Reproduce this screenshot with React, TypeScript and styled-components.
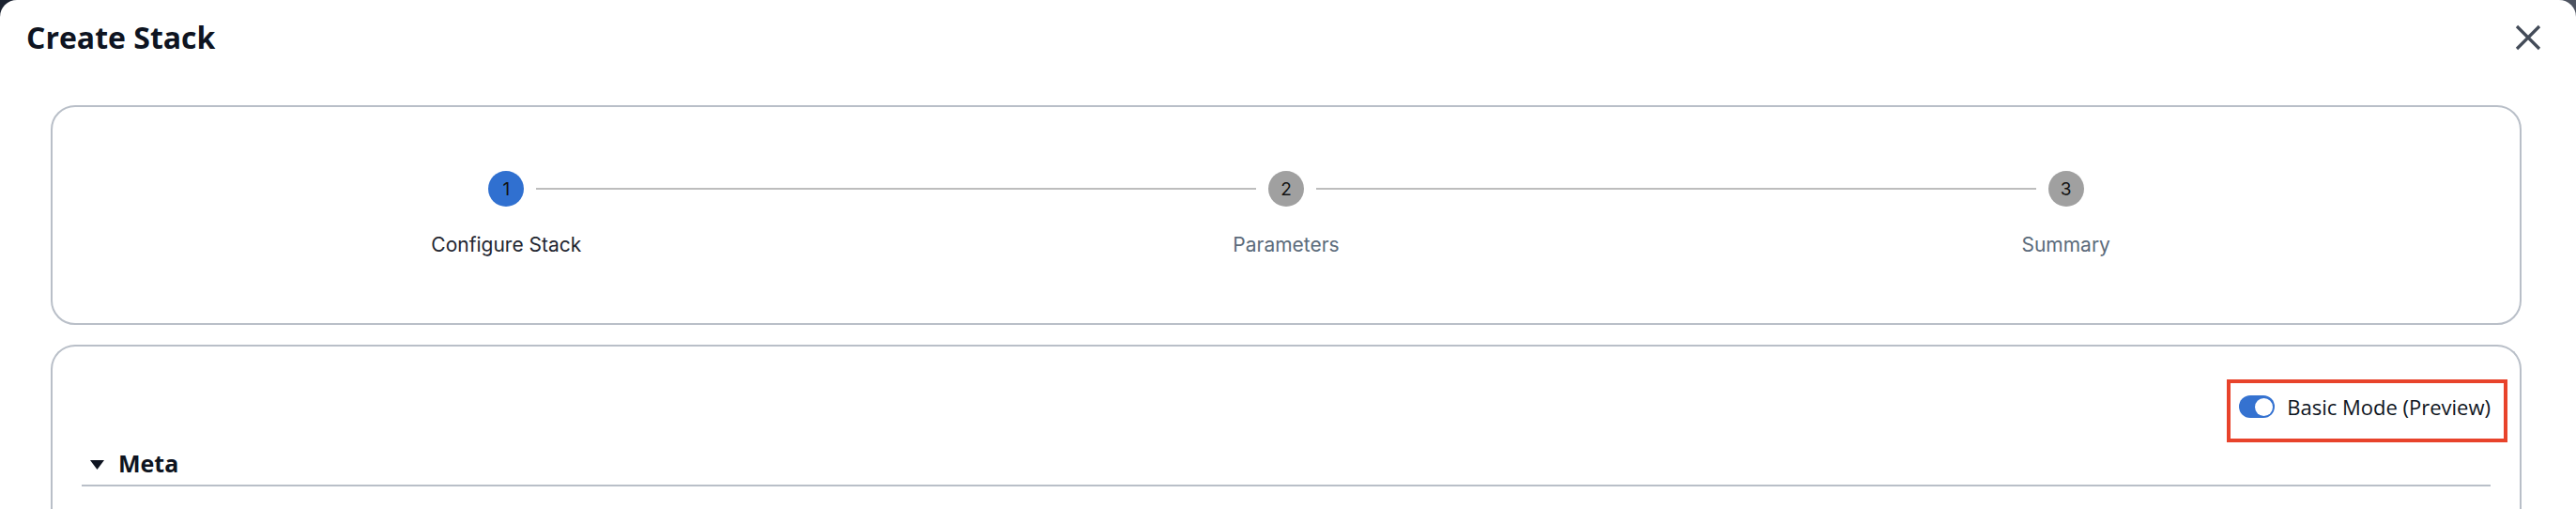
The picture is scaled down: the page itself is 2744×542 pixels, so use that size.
import React from "react";
import styled, { createGlobalStyle } from "styled-components";

const GlobalStyle = createGlobalStyle`
  html, body { margin: 0; padding: 0; }
  body {
    background: linear-gradient(90deg, #1b2230 0%, #3a414e 60%, #4d5360 100%);
    font-family: "Open Sans", "Noto Sans", sans-serif;
  }
  * { box-sizing: border-box; }
`;

const Modal = styled.div`
  width: 2744px;
  height: 542px;
  background: #ffffff;
  border-radius: 18px 18px 0 0;
  overflow: hidden;
  display: flex;
  flex-direction: column;
`;

const Header = styled.header`
  display: flex;
  align-items: center;
  justify-content: space-between;
  height: 62px;
  padding: 18px 37px 0 28px;
`;

const Title = styled.h2`
  margin: 0;
  font-size: 32px;
  font-weight: 700;
  line-height: 44px;
  color: #0e1421;
`;

const CloseButton = styled.button`
  width: 28px;
  height: 28px;
  padding: 0;
  border: none;
  background: none;
  display: flex;
  align-items: center;
  justify-content: center;
  cursor: pointer;
`;

const Body = styled.main`
  flex: 1;
  display: flex;
  flex-direction: column;
  gap: 21px;
  padding: 50px 58px 0 54px;
`;

const StepperCard = styled.section`
  border: 2px solid #b9bfc8;
  border-radius: 26px;
  padding: 68px 68px 70px;
  display: grid;
  grid-template-columns: repeat(3, 1fr);
`;

const Step = styled.div`
  display: flex;
  flex-direction: column;
  align-items: center;
`;

const Track = styled.div`
  width: 100%;
  display: flex;
  align-items: center;
  gap: 13px;
`;

const Connector = styled.span<{ $hidden?: boolean }>`
  flex: 1;
  height: 2px;
  background: ${(p) => (p.$hidden ? "transparent" : "#bdbdbd")};
`;

const Circle = styled.span<{ $active?: boolean }>`
  width: 38px;
  height: 38px;
  border-radius: 50%;
  flex-shrink: 0;
  display: flex;
  align-items: center;
  justify-content: center;
  background: ${(p) => (p.$active ? "#3070d0" : "#a0a0a0")};
  color: #121212;
  font-family: Inter, "Noto Sans", sans-serif;
  font-size: 19px;
  line-height: 1;
`;

const StepLabel = styled.span<{ $active?: boolean }>`
  margin-top: 27px;
  font-family: Inter, "Noto Sans", sans-serif;
  font-size: 21px;
  line-height: 27px;
  color: ${(p) => (p.$active ? "#1f2630" : "#5b6b7b")};
`;

const ConfigCard = styled.section`
  flex: 1;
  border: 2px solid #b9bfc8;
  border-bottom: none;
  border-radius: 26px 26px 0 0;
  padding: 35px 31px 0;
  display: flex;
  flex-direction: column;
`;

const ToolbarRow = styled.div`
  display: flex;
  justify-content: flex-end;
  margin-right: -18px;
`;

const ModeToggle = styled.label`
  display: flex;
  align-items: center;
  gap: 13px;
  border: 4px solid #e8432b;
  padding: 10px 14px 19px 9px;
  font-size: 22px;
  line-height: 30px;
  color: #0e1421;
  cursor: pointer;
`;

const Switch = styled.span<{ $on?: boolean }>`
  width: 38px;
  height: 24px;
  border-radius: 12px;
  background: ${(p) => (p.$on ? "#3572d0" : "#b0b6bf")};
  display: flex;
  align-items: center;
  justify-content: ${(p) => (p.$on ? "flex-end" : "flex-start")};
  padding: 0 2px;
  flex-shrink: 0;
`;

const Knob = styled.span`
  width: 19px;
  height: 19px;
  border-radius: 50%;
  background: #ffffff;
`;

const SectionHeader = styled.div`
  margin-top: 5px;
  display: flex;
  align-items: center;
  gap: 15px;
  padding: 0 0 6px 9px;
  border-bottom: 2px solid #b9bfc8;
`;

const SectionTitle = styled.h3`
  margin: 0;
  font-size: 25px;
  font-weight: 700;
  line-height: 34px;
  color: #0e1421;
`;

const Caret = styled.svg`
  margin-top: 4px;
  flex-shrink: 0;
`;

const steps = ["Configure Stack", "Parameters", "Summary"];

export default function App() {
  return (
    <>
      <GlobalStyle />
      <Modal>
        <Header>
          <Title>Create Stack</Title>
          <CloseButton aria-label="Close">
            <svg width="28" height="28" viewBox="0 0 28 28">
              <path d="M2 2 L26 26 M26 2 L2 26" stroke="#434b58" strokeWidth="3.2" fill="none" />
            </svg>
          </CloseButton>
        </Header>
        <Body>
          <StepperCard>
            {steps.map((s, i) => (
              <Step key={s}>
                <Track>
                  <Connector $hidden={i === 0} />
                  <Circle $active={i === 0}>{i + 1}</Circle>
                  <Connector $hidden={i === steps.length - 1} />
                </Track>
                <StepLabel $active={i === 0}>{s}</StepLabel>
              </Step>
            ))}
          </StepperCard>
          <ConfigCard>
            <ToolbarRow>
              <ModeToggle>
                <Switch $on>
                  <Knob />
                </Switch>
                Basic Mode (Preview)
              </ModeToggle>
            </ToolbarRow>
            <SectionHeader>
              <Caret width="15" height="10" viewBox="0 0 15 10">
                <polygon points="0,0 15,0 7.5,10" fill="#0e1421" />
              </Caret>
              <SectionTitle>Meta</SectionTitle>
            </SectionHeader>
          </ConfigCard>
        </Body>
      </Modal>
    </>
  );
}
